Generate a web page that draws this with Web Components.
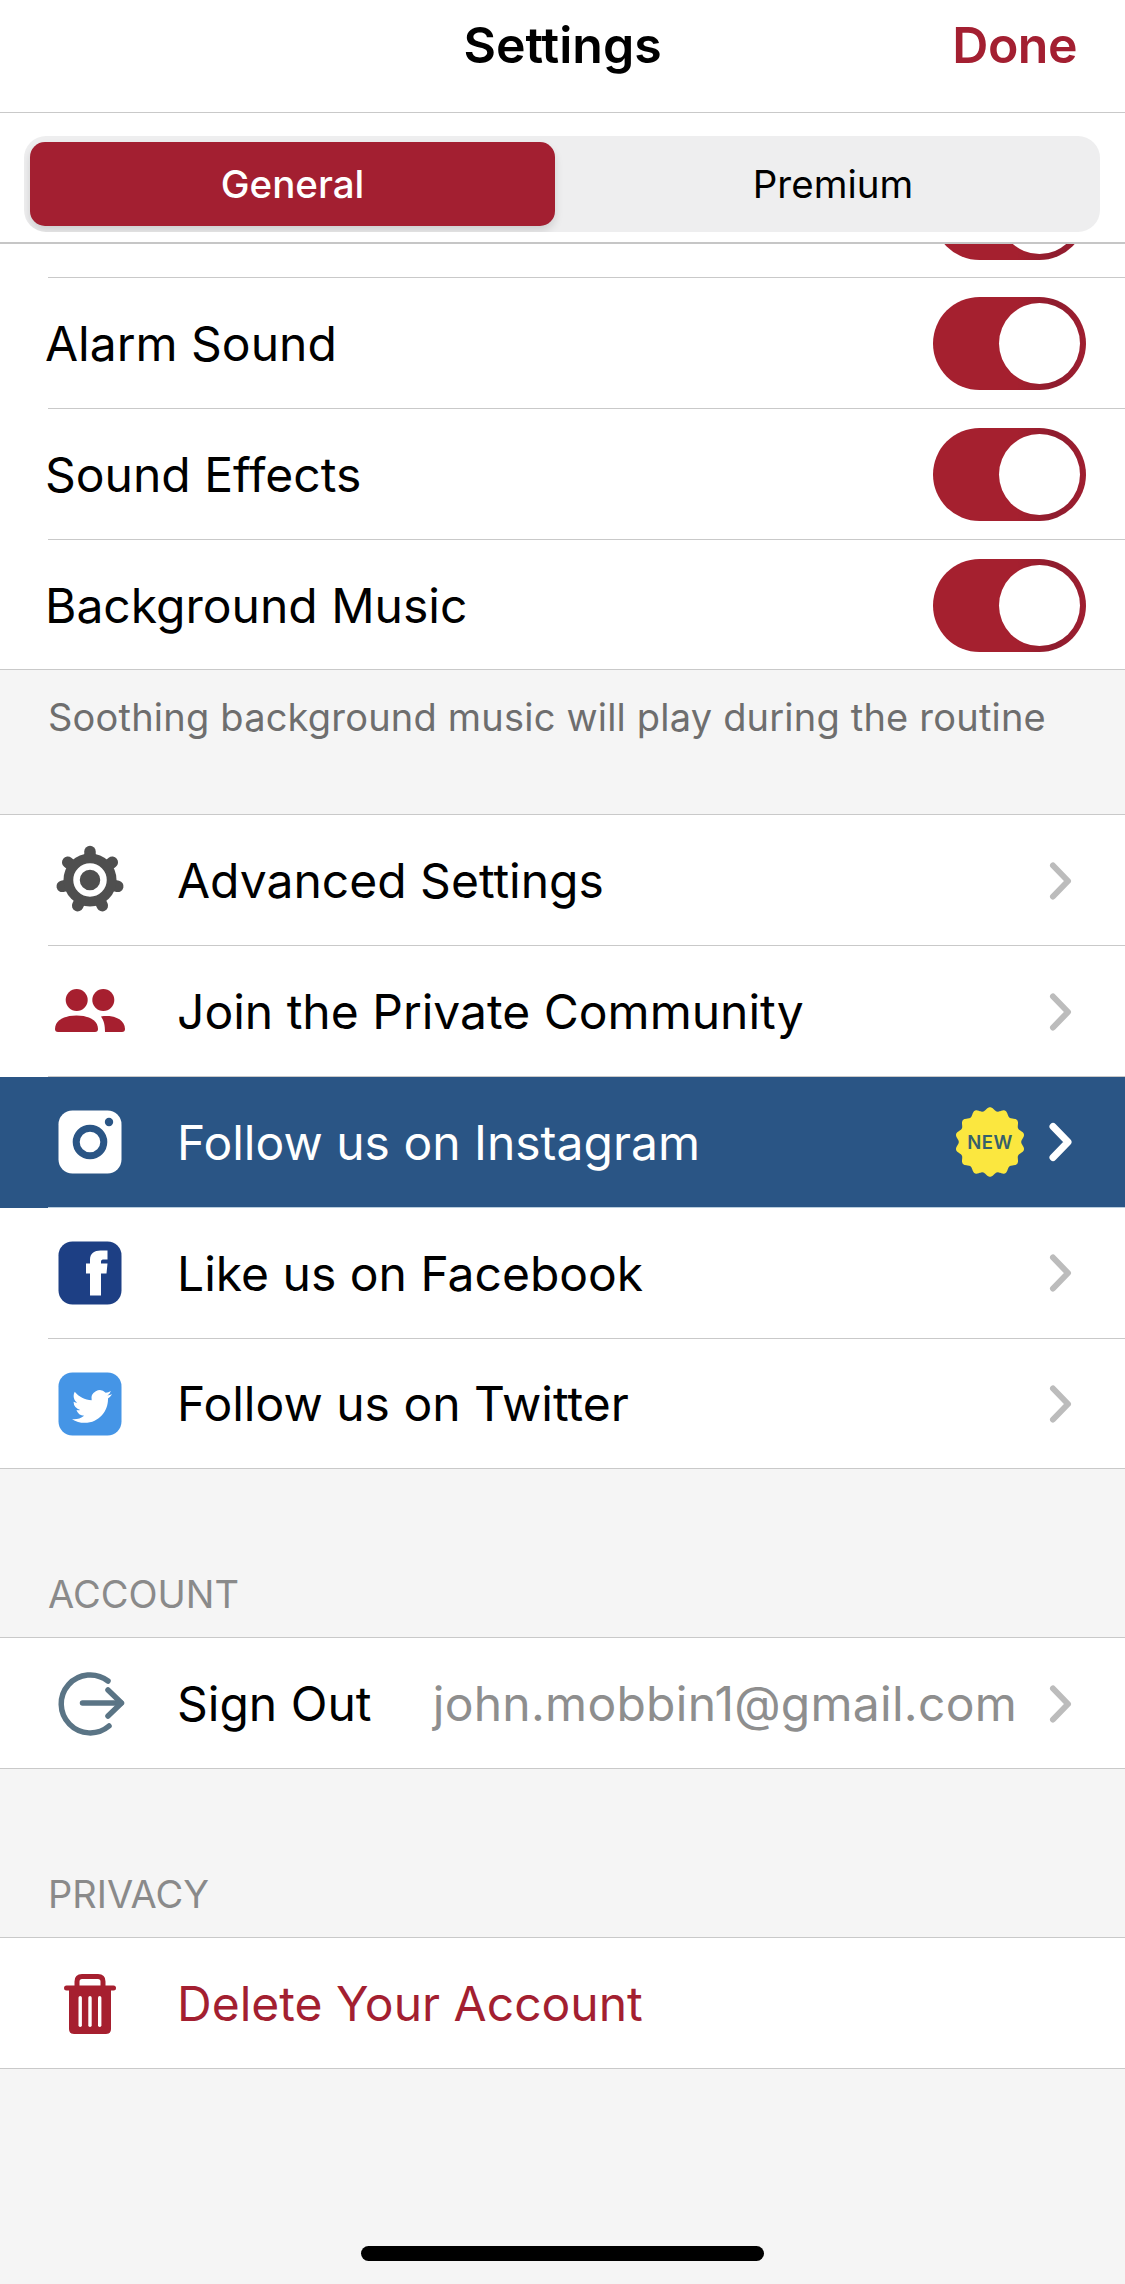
<!DOCTYPE html>
<html lang="en"><head><meta charset="utf-8"><title>Settings</title>
<style>
html,body{margin:0;padding:0}
body{width:1125px;height:2284px;overflow:hidden;background:#f5f5f5;font-family:Inter,"Liberation Sans",sans-serif;color:#000;font-size:48px;-webkit-font-smoothing:antialiased}
</style></head><body>
<settings-app>
  <nav-bar title="Settings" action="Done"></nav-bar>
  <segment-bar first="General" second="Premium"></segment-bar>
  <settings-scroll>
    <settings-group flush>
      <settings-row clipped><toggle-switch slot="end"></toggle-switch></settings-row>
      <settings-row>Alarm Sound<toggle-switch slot="end"></toggle-switch></settings-row>
      <settings-row>Sound Effects<toggle-switch slot="end"></toggle-switch></settings-row>
      <settings-row last>Background Music<toggle-switch slot="end"></toggle-switch></settings-row>
    </settings-group>
    <group-note>Soothing background music will play during the routine</group-note>
    <settings-group>
      <settings-row icon><app-icon slot="icon" name="gear"></app-icon>Advanced Settings<row-chevron slot="end"></row-chevron></settings-row>
      <settings-row icon><app-icon slot="icon" name="people"></app-icon>Join the Private Community<row-chevron slot="end"></row-chevron></settings-row>
      <settings-row icon highlight><app-icon slot="icon" name="instagram"></app-icon>Follow us on Instagram<new-badge slot="end"></new-badge><row-chevron slot="end" light></row-chevron></settings-row>
      <settings-row icon><app-icon slot="icon" name="facebook"></app-icon>Like us on Facebook<row-chevron slot="end"></row-chevron></settings-row>
      <settings-row icon last><app-icon slot="icon" name="twitter"></app-icon>Follow us on Twitter<row-chevron slot="end"></row-chevron></settings-row>
    </settings-group>
    <group-label>ACCOUNT</group-label>
    <settings-group>
      <settings-row icon last><app-icon slot="icon" name="signout"></app-icon>Sign Out<row-value slot="end">john.mobbin1@gmail.com</row-value><row-chevron slot="end"></row-chevron></settings-row>
    </settings-group>
    <group-label>PRIVACY</group-label>
    <settings-group>
      <settings-row icon last danger><app-icon slot="icon" name="trash"></app-icon>Delete Your Account</settings-row>
    </settings-group>
  </settings-scroll>
  <home-bar></home-bar>
</settings-app>
<script>
const RED='#a31f31', LINE='#c9c9c9';
function def(name, css, html){
  customElements.define(name, class extends HTMLElement{
    connectedCallback(){
      if(this.shadowRoot) return;
      const r=this.attachShadow({mode:'open'});
      r.innerHTML='<style>'+css+'</style>'+(typeof html==='function'?html(this):html);
    }
  });
}
def('settings-app',':host{display:flex;flex-direction:column;height:2284px}','<slot></slot>');
def('nav-bar',`:host{display:grid;grid-template-columns:1fr auto 1fr;align-items:center;height:112px;box-sizing:content-box;background:#fff;border-bottom:1px solid ${LINE};padding:0 48px}
 .t{font-size:50px;font-weight:600;padding-bottom:22px}.a{justify-self:end;font-size:50px;font-weight:600;color:${RED};padding-bottom:22px;letter-spacing:-.5px}`,
 h=>`<span></span><span class="t">${h.getAttribute('title')}</span><span class="a">${h.getAttribute('action')}</span>`);
def('segment-bar',`:host{display:block;background:#fff;height:129px;box-sizing:content-box;padding:0;border-bottom:2px solid #c6c6c6}
 .s{margin:23px 25px 0 24px;height:96px;box-sizing:border-box;background:#eeeeef;border-radius:22px;padding:6px 6px;display:grid;grid-template-columns:525px 1fr;overflow:hidden;font-size:38.5px;font-weight:400}
 .on{background:${RED};color:#fff;border-radius:15px;display:flex;align-items:center;justify-content:center;box-shadow:0 5px 8px rgba(0,0,0,.13);font-weight:500}
 .off{display:flex;align-items:center;justify-content:center;padding-left:17px;color:#000}`,
 h=>`<div class="s"><div class="on">${h.getAttribute('first')}</div><div class="off">${h.getAttribute('second')}</div></div>`);
def('settings-scroll',':host{display:block;overflow:hidden;flex:0 0 auto}','<slot></slot>');
def('settings-group',`:host{display:block;background:#fff;border-top:1px solid ${LINE}}:host([flush]){border-top:0}`,'<slot></slot>');
def('settings-row',`:host{display:block;color:#000;font-size:48px}
 .r{height:130.8px;box-sizing:border-box;margin-left:48px;border-bottom:1px solid ${LINE};display:flex;align-items:center;padding-right:39px;padding-top:2px}
 .i{display:none}
 .l{flex:1;white-space:nowrap;margin-left:-3px}
 .e{display:flex;align-items:center}
 :host([clipped]){margin-top:-96.8px}
 :host([last]) .r{margin-left:0;padding-left:48px}
 :host([icon]) .i{display:block;width:84px;height:84px;margin-right:46px;flex:none}
 :host([icon]) .l{margin-left:-1px}
 :host([icon]) .r{padding-right:51px;padding-top:1px}
 :host([highlight]){background:#2a5585;color:#fff}
 :host([highlight]) .r{border-bottom-color:#b9cddd}
 :host([danger]){color:${RED}}
 :host([danger]) .r{padding-top:0}`,
 `<div class="r"><div class="i"><slot name="icon"></slot></div><div class="l"><slot></slot></div><div class="e"><slot name="end"></slot></div></div>`);
def('toggle-switch',`:host{display:block;width:153px;height:93px;border-radius:46.5px;background:linear-gradient(90deg,#a5202f 55%,#8e1c2e 80%,#a01f30);position:relative}
 .k{position:absolute;right:6px;top:6px;width:81px;height:81px;border-radius:50%;background:#fff}`,'<div class="k"></div>');
def('row-chevron',`:host{display:block;width:26px;height:42px;line-height:0}svg{display:block}`,
 h=>`<svg width="26" height="42" viewBox="0 0 26 42"><path d="M5 5.5 L20 21 L5 36.5" fill="none" stroke="${h.hasAttribute('light')?'#fff':'#bcbcbc'}" stroke-width="${h.hasAttribute('light')?7:6}" stroke-linecap="round" stroke-linejoin="round"/></svg>`);
def('row-value',`:host{display:block;color:#8e8e8e;margin-right:31px;letter-spacing:.27px}`,'<slot></slot>');
def('group-note',`:host{display:block;box-sizing:border-box;height:144px;padding:24px 48px 0;font-size:38px;line-height:46px;color:#6e6e6e;letter-spacing:.2px;white-space:nowrap}`,'<slot></slot>');
def('group-label',`:host{display:flex;align-items:flex-end;box-sizing:border-box;height:168px;padding:0 48px 20px;font-size:38px;line-height:46px;color:#8a8a8a}`,'<slot></slot>');
def('home-bar',`:host{display:block;width:403px;height:15px;border-radius:8px;background:#000;margin:auto auto 23px}`,'');
function wavy(cx,cy,r,a,n){let d='';for(let i=0;i<=720;i+=2){const t=i/720*2*Math.PI,q=r+a*Math.cos(n*t);d+=(i?'L':'M')+(cx+q*Math.sin(t)).toFixed(2)+' '+(cy-q*Math.cos(t)).toFixed(2)}return d+'Z'}
def('new-badge',`:host{display:block;position:relative;width:70px;height:70px;margin-right:23px}
 svg{position:absolute;inset:0}
 span{position:absolute;inset:0;display:flex;align-items:center;justify-content:center;font-size:18.5px;font-weight:600;color:#35606c;letter-spacing:.5px}`,
 ()=>`<svg width="70" height="70" viewBox="0 0 70 70"><path d="${wavy(35,35,33,1.8,14)}" fill="#fbe73f"/></svg><span>NEW</span>`);
const gearTeeth=[0,1,2,3,4,5,6].map(i=>`<line x1="42" y1="41" x2="42" y2="12.5" transform="rotate(${(i*360/7).toFixed(2)} 42 41)"/>`).join('');
const ICONS={
 gear:`<g stroke="#4f4f4f" stroke-width="11.5" stroke-linecap="round">${gearTeeth}</g><circle cx="42" cy="41" r="26.5" fill="#4f4f4f"/><circle cx="42" cy="41" r="13.5" fill="#4f4f4f" stroke="#fff" stroke-width="6.5"/>`,
 people:`<g transform="translate(7,18)" fill="#a61f2f"><circle cx="21.7" cy="12" r="11"/><circle cx="48.3" cy="12" r="11"/><path d="M0 41C0 32 10 27.5 21.5 27.5S43 32 43 41Q43 44 40 44H3Q0 44 0 41Z"/><path d="M46 28.5C58 26.5 70 31 70 41Q70 44 67 44H50C50 37 49 33 46 28.5Z"/></g>`,
 instagram:`<g transform="translate(10.5,10.5)"><rect width="63" height="63" rx="14" fill="#fff"/><circle cx="31.5" cy="31.5" r="13.8" fill="none" stroke="#2a5585" stroke-width="7"/><circle cx="50.5" cy="11.5" r="4.2" fill="#2a5585"/></g>`,
 facebook:`<g transform="translate(10.5,10.5)"><rect width="63" height="63" rx="14" fill="#1d3f84"/><path fill="#fff" d="M31.5 54V32H27.5V22H31.5V18C31.5 12 36 9 42 9H49V18H44.5C43 18 42.5 19 42.5 20.5V22H49L48 32H42.5V54Z"/></g>`,
 twitter:`<g transform="translate(10.5,10.5)"><rect width="63" height="63" rx="14" fill="#4595e6"/><path transform="translate(13.5,14) scale(1.67)" fill="#fff" d="M23.953 4.57a10 10 0 01-2.825.775 4.958 4.958 0 002.163-2.723c-.951.555-2.005.959-3.127 1.184a4.92 4.92 0 00-8.384 4.482C7.69 8.095 4.067 6.13 1.64 3.162a4.822 4.822 0 00-.666 2.475c0 1.71.87 3.213 2.188 4.096a4.904 4.904 0 01-2.228-.616v.06a4.923 4.923 0 003.946 4.827 4.996 4.996 0 01-2.212.085 4.936 4.936 0 004.604 3.417 9.867 9.867 0 01-6.102 2.105c-.39 0-.779-.023-1.17-.067a13.995 13.995 0 007.557 2.209c9.053 0 13.998-7.496 13.998-13.985 0-.21 0-.42-.015-.63A9.935 9.935 0 0024 4.59z"/></g>`,
 signout:`<g fill="none" stroke="#5a7485" stroke-width="5.5" stroke-linecap="round" stroke-linejoin="round"><path d="M60 19A29 29 0 1 0 61 64"/><path d="M34.5 41H73"/><path d="M60 28L73.5 41L60 54"/></g>`,
 trash:`<g transform="translate(16,13)" fill="#a61f2f"><rect y="11.5" width="52" height="5" rx="2.5"/><path d="M13 13V7.5Q13 2.5 18 2.5H34Q39 2.5 39 7.5V13" fill="none" stroke="#a61f2f" stroke-width="5"/><path d="M5 15H47V55Q47 60 42 60H10Q5 60 5 55Z"/><g fill="#fff"><rect x="14.5" y="22" width="3.4" height="31" rx="1.7"/><rect x="24.3" y="22" width="3.4" height="31" rx="1.7"/><rect x="34" y="22" width="3.4" height="31" rx="1.7"/></g></g>`
};
def('app-icon',`:host{display:block;width:84px;height:84px}svg{display:block}`,
 h=>`<svg width="84" height="84" viewBox="0 0 84 84">${ICONS[h.getAttribute('name')]}</svg>`);
</script>
</body></html>
